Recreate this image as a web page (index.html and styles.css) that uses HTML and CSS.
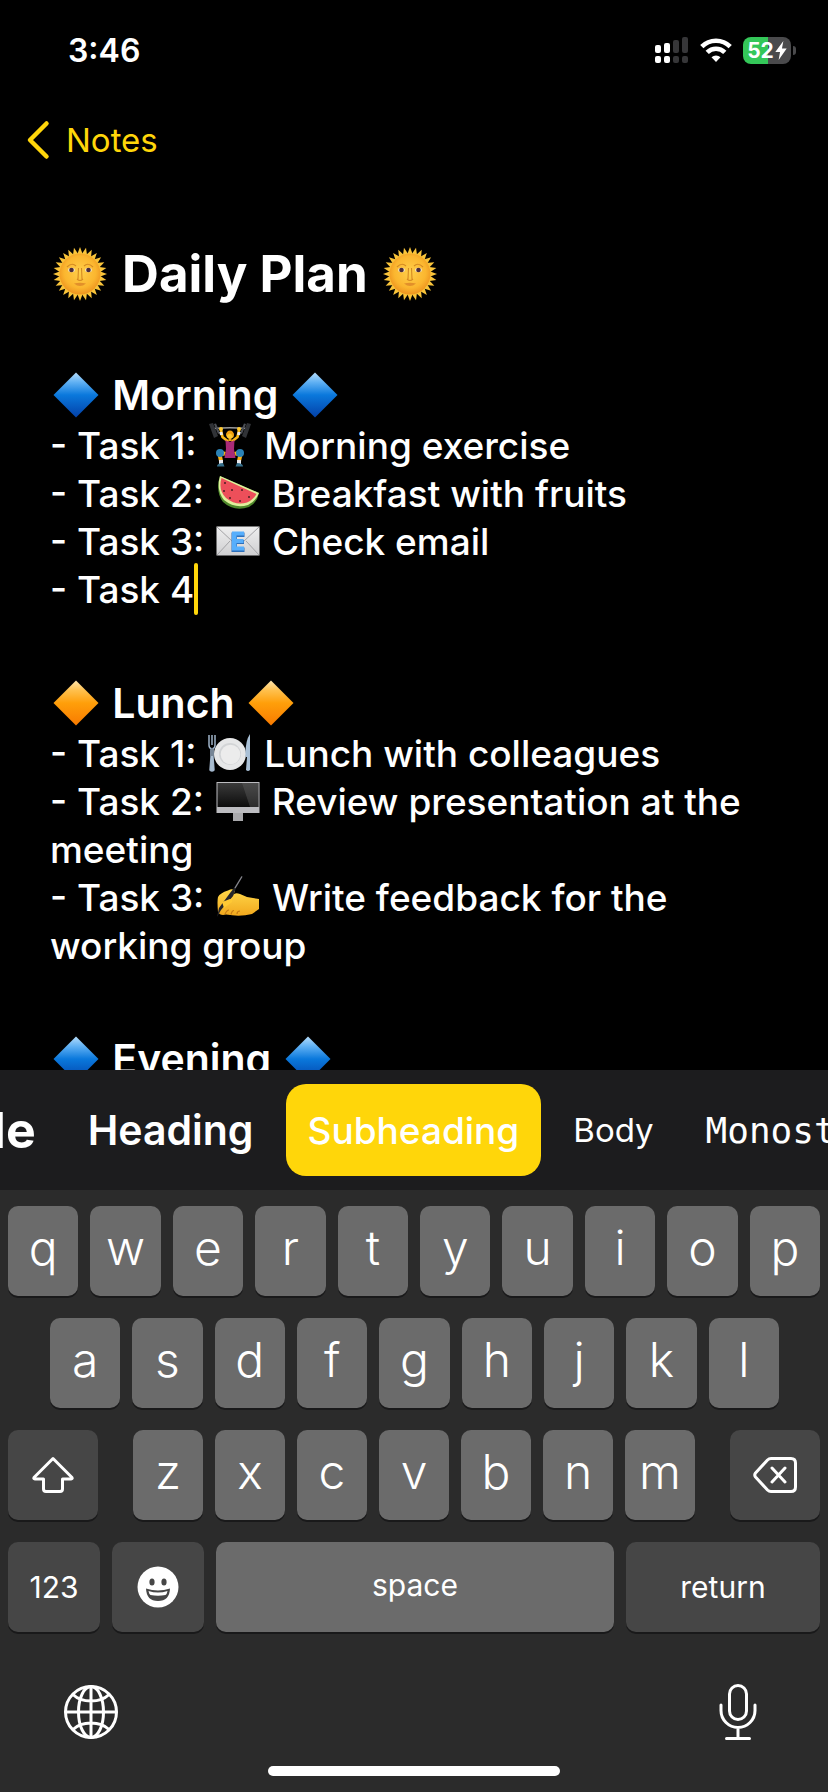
FILE: index.html
```html
<!DOCTYPE html>
<html lang="en">
<head>
<meta charset="utf-8">
<meta name="viewport" content="width=device-width, initial-scale=1">
<title>Daily Plan</title>
<link rel="stylesheet" href="styles.css">
</head>
<body>
<svg class="defs" aria-hidden="true">
  <defs>
    <linearGradient id="blue" x1="0" y1="0" x2="0" y2="1"><stop offset="0" stop-color="#b5dcfb"/><stop offset=".22" stop-color="#5fb0f3"/><stop offset=".5" stop-color="#0a78dc"/><stop offset="1" stop-color="#0340a8"/></linearGradient>
    <linearGradient id="orange" x1="0" y1="0" x2="0" y2="1"><stop offset="0" stop-color="#ffe6ae"/><stop offset=".22" stop-color="#ffc04d"/><stop offset=".5" stop-color="#ff9f0a"/><stop offset="1" stop-color="#f87a00"/></linearGradient>
    <radialGradient id="sunface" cx=".5" cy=".45" r=".55"><stop offset="0" stop-color="#ffcf4a"/><stop offset=".7" stop-color="#fbb62f"/><stop offset="1" stop-color="#ee9420"/></radialGradient>
    <linearGradient id="paper" x1="0" y1="0" x2="0" y2="1"><stop offset="0" stop-color="#efefef"/><stop offset="1" stop-color="#cfcfd1"/></linearGradient>
    <linearGradient id="screen" x1="0" y1="0" x2="0" y2="1"><stop offset="0" stop-color="#3a3a3a"/><stop offset="1" stop-color="#0c0c0c"/></linearGradient>
    <linearGradient id="skin" x1="0" y1="0" x2="0" y2="1"><stop offset="0" stop-color="#ffd84a"/><stop offset="1" stop-color="#f2a81d"/></linearGradient>
    <path id="ray" d="M-3-19 0-27 3-19Z"/>
    <g id="rays"><use href="#ray"/><use href="#ray" transform="rotate(12.86)"/><use href="#ray" transform="rotate(25.71)"/><use href="#ray" transform="rotate(38.57)"/></g>
    <symbol id="sun" viewBox="-27 -27 54 54">
      <g fill="#f9c43a"><use href="#rays"/><use href="#rays" transform="rotate(51.43)"/><use href="#rays" transform="rotate(102.86)"/><use href="#rays" transform="rotate(154.29)"/><use href="#rays" transform="rotate(205.71)"/><use href="#rays" transform="rotate(257.14)"/><use href="#rays" transform="rotate(308.57)"/></g>
      <circle r="20.500" fill="url(#sunface)"/>
      <path d="M-13-7q5-5 9-1M4-8q4-4 9 1M-1.500-6-2 5M1.500-6 2 5M-3 5q3 3 6 0" fill="none" stroke="#d58a22" stroke-width="1.100"/>
      <ellipse cx="-8.500" cy="-4" rx="3.400" ry="2.200" fill="#f5e4c0"/><ellipse cx="8.500" cy="-4" rx="3.400" ry="2.200" fill="#f5e4c0"/>
      <circle cx="-8.500" cy="-4" r="2.300" fill="#4a2c3c"/><circle cx="8.500" cy="-4" r="2.300" fill="#4a2c3c"/>
      <path d="M-6 9.500q6-1.500 12 0-6 5-12 0Z" fill="#e2902a"/>
    </symbol>
    <symbol id="diamond-blue" viewBox="0 0 46 46"><path d="M23 .5 45.5 23 23 45.5.5 23Z" fill="url(#blue)"/></symbol>
    <symbol id="diamond-orange" viewBox="0 0 46 46"><path d="M23 .5 45.5 23 23 45.5.5 23Z" fill="url(#orange)"/></symbol>
    <symbol id="lifter" viewBox="0 0 44 44">
      <path d="M5 5.500Q22 4 39 5.500" fill="none" stroke="#9a9a9a" stroke-width="1.300"/>
      <path d="M1 1 5 0 10 13 6 15ZM43 1 39 0 34 13 38 15Z" fill="#303236"/>
      <path d="M6 1 8 .5 12 10 10 11ZM38 1 36 .5 32 10 34 11Z" fill="#4b4e54"/>
      <path d="M13 7 14.500 14 19.500 18M31 7 29.500 14 24.500 18" fill="none" stroke="#fbb917" stroke-width="2.600" stroke-linecap="round"/>
      <circle cx="13" cy="6" r="2" fill="#ffc92e"/><circle cx="31" cy="6" r="2" fill="#ffc92e"/>
      <path d="M12.800 9 13.500 12M31.200 9 30.500 12" stroke="#eee" stroke-width="3"/>
      <path d="M20.500 13h3v5h-3Z" fill="#f0a414"/>
      <circle cx="22" cy="12" r="3.600" fill="#ffc92e"/><path d="M18 12Q18.500 7.500 22 7.500T26 12L25 15Q24.500 11 22 10.500 19.500 11 18.500 13Z" fill="#f0a010"/>
      <path d="M17.500 17Q22 20.500 26.500 17L26 26 27.500 35H16.500L18 26Z" fill="#a92a77"/>
      <path d="M17 31 11 29 13 38M27 31 33 29 31 38" fill="none" stroke="#fbb31a" stroke-width="4" stroke-linejoin="round"/>
      <circle cx="12" cy="30" r="4" fill="#2b82b5"/><circle cx="32" cy="30" r="4" fill="#2b82b5"/>
      <path d="M11 37h4v4h-4ZM29 37h4v4h-4Z" fill="#e9e9ee"/>
      <path d="M9 43.500q0-3.500 6-3.500l1.500 3.500ZM35 43.500q0-3.500-6-3.500l-1.500 3.500Z" fill="#36708c"/>
    </symbol>
    <symbol id="melon" viewBox="0 0 44 44">
      <path d="M4 5Q-1 20 7 31 18 41 33 36 41 32 43 22Z" fill="#4f8a2b"/>
      <path d="M4 5Q0 19 8 29 19 38 32 34 40 30 43 22Z" fill="#dff09c"/>
      <path d="M5.500 7Q2 19 10 27 20 35 31 31.500 38 28 40.500 23Z" fill="#ed4f5a"/>
      <g fill="#4b1e22"><circle cx="9" cy="12" r="1"/><circle cx="8" cy="20" r="1"/><circle cx="16" cy="19" r="1"/><circle cx="14" cy="27" r="1"/><circle cx="26" cy="19" r="1"/><circle cx="24" cy="30" r="1"/><circle cx="33" cy="26" r="1"/></g>
    </symbol>
    <symbol id="mail" viewBox="0 0 44 44">
      <path d="M.5 7.500h43v29H.5Z" fill="url(#paper)"/>
      <path d="M1 8 17 23M43 8 27 23M1 36 14 22M43 36 30 22" stroke="#a3a3a6" stroke-width="1"/>
      <path d="M15.500 13.500h13v4.500H21v3h7v4h-7v3.500h7.500v4.500h-13Z" fill="#2d6fba"/>
      <path d="M16 12.500h12v4h-7.500v3.500h7v4h-7v3.500H28v4H16Z" fill="#56aefc"/>
    </symbol>
    <symbol id="plate" viewBox="0 0 44 44">
      <circle cx="22" cy="23" r="16" fill="#e6e7e8"/><circle cx="22" cy="23" r="11" fill="#d2d4d6"/><circle cx="22.500" cy="23.500" r="9.800" fill="#ececec"/>
      <path d="M1 4v10q0 3 2 3.500V26L2 39q2 2 4 0L5 26v-8.500q2-.5 2-3.500V4M4 4v10" fill="none" stroke="#9eb2c8" stroke-width="1.500"/>
      <path d="M3 25 2 39q2 2 4 0L5 25Z" fill="#a9bdd0"/>
      <path d="M42 3v36q-2 2-4 0l1-13h-1.500Q37 10 42 3Z" fill="#a9c0d6"/>
    </symbol>
    <symbol id="monitor" viewBox="0 0 44 44">
      <path d="M17 33h10v9H17Z" fill="#a9a9ac"/><path d="M.5 3h43v31H.5Z" fill="#bcbcc0"/><path d="M1.500 4h41v24h-41Z" fill="url(#screen)"/><path d="M26 4h16.500v24H34Z" fill="#6b6b6b" opacity=".35"/>
    </symbol>
    <symbol id="writing" viewBox="0 0 44 44">
      <path d="M2 37Q1 26 2 22 4 18 12 15.500 17 13 19 16L17 20Q19 17 24 19L31 22 43 24V34L36 39Q24 42 10 39.500 4 41 2 37Z" fill="url(#skin)"/>
      <path d="M9 39q2-4 4-4M15 39.500q1-4 3-4M21 39q0-3 3-3M17 20l-6 7" fill="none" stroke="#c67b14" stroke-width="1.200"/>
      <path d="M25.500 1 26.500 1.500 20 13 17 21 5 35 1 42 3 33 14 18 18 13Z" fill="#26262b"/><path d="M26 1.500 19 13" stroke="#898a90" stroke-width="1.200"/>
      <path d="M6 27 14 24q3 0 2 3L8 33Z" fill="#ffc934"/>
    </symbol>
  </defs>
</svg>

<header class="status">
  <time class="clock">3:46</time>
  <div class="indicators">
    <svg class="signal" viewBox="0 0 34 28" role="img" aria-label="Signal"><g fill="#fff"><rect x="0" y="9" width="6" height="8" rx="2"/><rect x="9" y="7" width="6" height="10" rx="2"/><rect x="0" y="20" width="6" height="7" rx="2"/><rect x="9" y="20" width="6" height="7" rx="2"/></g><g fill="#363638"><rect x="18" y="4" width="6" height="13" rx="2"/><rect x="27" y="1" width="6" height="16" rx="2"/><rect x="18" y="20" width="6" height="7" rx="2"/><rect x="27" y="20" width="6" height="7" rx="2"/></g></svg>
    <svg class="wifi" viewBox="0 0 32 26" role="img" aria-label="Wi-Fi"><g fill="none" stroke="#fff" stroke-width="4.600"><path d="M1.800 9.600a20 20 0 0 1 28.400 0"/><path d="M7.200 15.300a12.500 12.500 0 0 1 17.600 0"/></g><path d="M16 25 11.500 20.300a6.500 6.500 0 0 1 9 0Z" fill="#fff"/></svg>
    <div class="battery"><span class="level">52</span><svg class="bolt" viewBox="0 0 12 20" aria-hidden="true"><path d="M8.500 0 0 11.500h5L3.500 20 12 8H7Z" fill="#fff"/></svg></div>
  </div>
</header>

<nav class="nav">
  <a class="back" href="#notes"><svg class="chevron" viewBox="0 0 24 40" aria-hidden="true"><path d="M20.500 3.500 4 20 20.500 36.500" fill="none" stroke="currentColor" stroke-width="4.500" stroke-linecap="round" stroke-linejoin="round"/></svg>Notes</a>
</nav>

<main class="note">
  <h1 class="title"><svg class="emoji-title" role="img" aria-label="sun"><use href="#sun"/></svg> Daily Plan <svg class="emoji-title" role="img" aria-label="sun"><use href="#sun"/></svg></h1>
  <section class="block">
    <h2 class="subhead"><svg class="emoji-sub" aria-hidden="true"><use href="#diamond-blue"/></svg> Morning <svg class="emoji-sub" aria-hidden="true"><use href="#diamond-blue"/></svg></h2>
    <p class="task">- Task 1: <svg class="emoji" role="img" aria-label="weight lifter"><use href="#lifter"/></svg> Morning exercise</p>
    <p class="task">- Task 2: <svg class="emoji" role="img" aria-label="watermelon"><use href="#melon"/></svg> Breakfast with fruits</p>
    <p class="task">- Task 3: <svg class="emoji" role="img" aria-label="email"><use href="#mail"/></svg> Check email</p>
    <p class="task">- Task 4<span class="caret"></span></p>
  </section>
  <section class="block">
    <h2 class="subhead"><svg class="emoji-sub" aria-hidden="true"><use href="#diamond-orange"/></svg> Lunch <svg class="emoji-sub" aria-hidden="true"><use href="#diamond-orange"/></svg></h2>
    <p class="task">- Task 1: <svg class="emoji" role="img" aria-label="plate"><use href="#plate"/></svg> Lunch with colleagues</p>
    <p class="task">- Task 2: <svg class="emoji" role="img" aria-label="monitor"><use href="#monitor"/></svg> Review presentation at the meeting</p>
    <p class="task">- Task 3: <svg class="emoji" role="img" aria-label="writing hand"><use href="#writing"/></svg> Write feedback for the working group</p>
  </section>
  <section class="block">
    <h2 class="subhead"><svg class="emoji-sub" aria-hidden="true"><use href="#diamond-blue"/></svg> Evening <svg class="emoji-sub" aria-hidden="true"><use href="#diamond-blue"/></svg></h2>
  </section>
</main>

<div class="formats" role="toolbar" aria-label="Text style">
  <button class="format format-title" type="button">Title</button>
  <button class="format format-heading" type="button">Heading</button>
  <button class="format format-sub" type="button" aria-pressed="true">Subheading</button>
  <button class="format format-body" type="button">Body</button>
  <button class="format format-mono" type="button">Monostyled</button>
</div>

<footer class="keyboard">
  <div class="row">
    <button class="key">q</button><button class="key">w</button><button class="key">e</button><button class="key">r</button><button class="key">t</button><button class="key">y</button><button class="key">u</button><button class="key">i</button><button class="key">o</button><button class="key">p</button>
  </div>
  <div class="row row-home">
    <button class="key">a</button><button class="key">s</button><button class="key">d</button><button class="key">f</button><button class="key">g</button><button class="key">h</button><button class="key">j</button><button class="key">k</button><button class="key">l</button>
  </div>
  <div class="row row-lower">
    <button class="key key-dark key-side" aria-label="shift"><svg class="glyph" viewBox="0 0 44 38"><path d="M22 2.500 41 21.500q.8 1.300-1 1.500H31.500V33q0 2.500-2.500 2.500H15q-2.500 0-2.500-2.500V23H4q-1.800-.2-1-1.500Z" fill="none" stroke="#fff" stroke-width="3" stroke-linejoin="round"/></svg></button>
    <div class="letters"><button class="key">z</button><button class="key">x</button><button class="key">c</button><button class="key">v</button><button class="key">b</button><button class="key">n</button><button class="key">m</button></div>
    <button class="key key-dark key-side" aria-label="delete"><svg class="glyph" viewBox="0 0 44 38"><path d="M18 2.500H38q4.500 0 4.500 4.500V31q0 4.500-4.500 4.500H18q-2 0-3.500-1.500L2.500 21q-1.500-2 0-4L14.500 4Q16 2.500 18 2.500ZM19 12 32 26M32 12 19 26" fill="none" stroke="#fff" stroke-width="3" stroke-linejoin="round" stroke-linecap="round"/></svg></button>
  </div>
  <div class="row">
    <button class="key key-dark key-fn">123</button>
    <button class="key key-dark key-fn" aria-label="emoji"><svg class="face" viewBox="0 0 42 42"><circle cx="21" cy="21" r="20.500" fill="#fff"/><ellipse cx="15" cy="16" rx="2.600" ry="3.500" fill="#464646"/><ellipse cx="27" cy="16" rx="2.600" ry="3.500" fill="#464646"/><path d="M9 22.500q12 4 24 0Q32.500 35 21 35T9 22.500Z" fill="#464646"/><path d="M11.500 25q9.500 3 19 0-.5 3-2 4-7.500 1.600-15 0-1.500-1-2-4Z" fill="#fff"/></svg></button>
    <button class="key key-space">space</button>
    <button class="key key-dark key-return">return</button>
  </div>
  <div class="tools">
    <button class="tool" aria-label="next keyboard"><svg class="tool-icon" viewBox="0 0 56 56"><g fill="none" stroke="#fff" stroke-width="3"><circle cx="28" cy="28" r="25.500"/><ellipse cx="28" cy="28" rx="12.500" ry="25.500"/><path d="M28 2.500v51M2.500 28h51M10 10.500q6.500 6.500 18 6.500t18-6.500M10 45.500Q16.500 39 28 39t18 6.500"/></g></svg></button>
    <button class="tool" aria-label="dictate"><svg class="tool-icon" viewBox="0 0 56 56"><g fill="none" stroke="#fff" stroke-width="3" stroke-linecap="round"><rect x="19.500" y="1.500" width="17" height="34" rx="8.500"/><path d="M11 21v5.500a17 17 0 0 0 34 0V21M28 44v10M16.500 54.500h23"/></g></svg></button>
  </div>
  <div class="home"></div>
</footer>
</body>
</html>
```
FILE: styles.css
```css
* { box-sizing: border-box; }
body {
  margin: 0;
  height: 100vh;
  display: flex;
  flex-direction: column;
  overflow: hidden;
  background: #000;
  color: #fff;
  font-family: Inter, "Liberation Sans", sans-serif;
}
button { border: 0; padding: 0; margin: 0; background: none; color: inherit; font: inherit; }
svg { display: block; }
.defs { position: absolute; width: 0; height: 0; }

.status { flex: none; height: 100px; padding: 0 32px 0 68px; display: flex; align-items: center; justify-content: space-between; }
.clock { font-size: 32px; font-weight: 600; }
.indicators { display: flex; align-items: center; gap: 11px; }
.signal { width: 34px; height: 28px; }
.wifi { width: 32px; height: 26px; }
.battery {
  position: relative;
  width: 48px;
  height: 27px;
  border-radius: 8px;
  margin-right: 5px;
  display: flex;
  align-items: center;
  justify-content: center;
  gap: 1px;
  background: linear-gradient(90deg, #34c759 52%, #4a4a4c 52%);
}
.battery::after { content: ""; position: absolute; left: 50px; top: 9px; width: 3px; height: 9px; border-radius: 0 3px 3px 0; background: #4a4a4c; }
.level { font-size: 21px; font-weight: 700; line-height: 27px; }
.bolt { width: 12px; height: 19px; }

.nav { flex: none; height: 80px; padding-left: 26px; display: flex; align-items: center; }
.back { display: flex; align-items: center; gap: 16px; color: #ffd60a; font-size: 33px; text-decoration: none; }
.chevron { width: 24px; height: 40px; }

.note { flex: 1; min-height: 0; overflow: hidden; padding: 62px 50px 0; }
.title { margin: 0; font-size: 51px; line-height: 64px; font-weight: 700; }
.block { margin-top: 62px; }
.subhead { margin: 0; font-size: 41px; line-height: 54px; font-weight: 600; }
.task { margin: 0; font-size: 37px; line-height: 48px; font-weight: 500; }
.emoji, .emoji-sub, .emoji-title { display: inline-block; vertical-align: middle; }
.emoji { width: 44px; height: 44px; margin: -8px 2px 0; }
.emoji-sub { width: 46px; height: 46px; margin: -8px 3px 0; }
.emoji-title { width: 54px; height: 54px; margin: -8px 3px 0; }
.caret { position: absolute; width: 4px; height: 52px; margin-top: -3px; border-radius: 2px; background: #ffd60a; }

.formats { flex: none; height: 120px; padding: 14px 0; display: flex; gap: 12px; overflow: hidden; background: #1c1c1e; }
.format { flex: none; padding: 0 20px; border-radius: 20px; white-space: nowrap; }
.format-title { margin-left: -93px; font-size: 50px; font-weight: 700; }
.format-heading { font-size: 41px; font-weight: 600; }
.format-sub { padding: 0 22px; font-size: 37px; font-weight: 500; background: #ffd60a; }
.format-body { font-size: 33px; }
.format-mono { font-family: "DejaVu Sans Mono", monospace; font-size: 36px; }

.keyboard { flex: none; padding: 16px 8px; display: flex; flex-direction: column; gap: 22px; background: #2b2b2b; }
.row { display: flex; gap: 12px; }
.row-home { padding: 0 41px 0 42px; }
.row-lower { gap: 35px; }
.letters { flex: 1; display: flex; gap: 12px; }
.key {
  flex: 1 1 0;
  min-width: 0;
  height: 90px;
  padding-bottom: 8px;
  border-radius: 10px;
  background: #6b6b6b;
  box-shadow: 0 2px 0 #19191a;
  font-size: 48px;
  font-weight: 300;
}
.key-dark { display: flex; align-items: center; justify-content: center; padding: 0; background: #464646; }
.key-side { flex: 0 0 90px; }
.key-fn { flex: 0 0 92px; font-size: 30px; font-weight: 400; }
.key-space { flex: 1; font-size: 30px; font-weight: 400; padding-bottom: 4px; }
.key-return { flex: 0 0 194px; font-size: 30px; font-weight: 400; }
.glyph { width: 44px; height: 38px; }
.face { width: 42px; height: 42px; }
.tools { display: flex; justify-content: space-between; padding: 30px 54px 4px 55px; }
.tool-icon { width: 56px; height: 56px; }
.home { align-self: center; width: 36%; height: 10px; border-radius: 5px; background: #fff; }
```
